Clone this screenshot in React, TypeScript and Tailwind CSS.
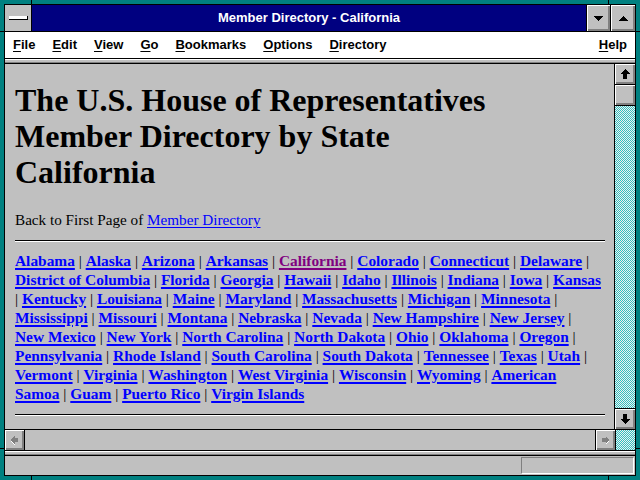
import React from 'react';

const rows: string[][] = [
  ['Alabama', '|', 'Alaska', '|', 'Arizona', '|', 'Arkansas', '|', 'California', '|', 'Colorado', '|', 'Connecticut', '|', 'Delaware', '|'],
  ['District of Columbia', '|', 'Florida', '|', 'Georgia', '|', 'Hawaii', '|', 'Idaho', '|', 'Illinois', '|', 'Indiana', '|', 'Iowa', '|', 'Kansas'],
  ['|', 'Kentucky', '|', 'Louisiana', '|', 'Maine', '|', 'Maryland', '|', 'Massachusetts', '|', 'Michigan', '|', 'Minnesota', '|'],
  ['Mississippi', '|', 'Missouri', '|', 'Montana', '|', 'Nebraska', '|', 'Nevada', '|', 'New Hampshire', '|', 'New Jersey', '|'],
  ['New Mexico', '|', 'New York', '|', 'North Carolina', '|', 'North Dakota', '|', 'Ohio', '|', 'Oklahoma', '|', 'Oregon', '|'],
  ['Pennsylvania', '|', 'Rhode Island', '|', 'South Carolina', '|', 'South Dakota', '|', 'Tennessee', '|', 'Texas', '|', 'Utah', '|'],
  ['Vermont', '|', 'Virginia', '|', 'Washington', '|', 'West Virginia', '|', 'Wisconsin', '|', 'Wyoming', '|', 'American'],
  ['Samoa', '|', 'Guam', '|', 'Puerto Rico', '|', 'Virgin Islands']
];

const menus = [
  ['F', 'ile'],
  ['E', 'dit'],
  ['V', 'iew'],
  ['G', 'o'],
  ['B', 'ookmarks'],
  ['O', 'ptions'],
  ['D', 'irectory']
];

const bevel = 'bg-[#c0c0c0] shadow-[inset_1px_1px_0_#ffffff,inset_-1px_-1px_0_#808080,inset_-2px_-2px_0_#808080]';
const dither = 'bg-[repeating-conic-gradient(#30c0c0_0_25%,#f0f0f0_0_50%)] bg-[length:2px_2px]';

function ArrowV({ down }: { down?: boolean }) {
  return (
    <svg width="20" height="20" viewBox="0 0 20 20" shapeRendering="crispEdges" className={down ? 'rotate-180' : ''}>
      <polygon points="10,5 5,10 8,10 8,15 12,15 12,10 15,10" fill="#000" />
    </svg>
  );
}

function ArrowH({ left }: { left?: boolean }) {
  return (
    <svg width="20" height="20" viewBox="0 0 20 20" shapeRendering="crispEdges" className={left ? '-scale-x-100' : ''}>
      <polygon points="10,7 14,11 10,15 10,13 11,12" fill="#ffffff" />
      <polygon points="10,6 14,10 10,14 10,12 6,12 6,8 10,8" fill="#808080" />
    </svg>
  );
}

function Tri({ up }: { up?: boolean }) {
  return (
    <svg width="9" height="5" viewBox="0 0 9 5" shapeRendering="crispEdges">
      <polygon points={up ? '4.5,0 9,5 0,5' : '0,0 9,0 4.5,5'} fill="#000" />
    </svg>
  );
}

export default function App() {
  return (
    <div className="relative h-[480px] w-[640px] overflow-hidden bg-[#008080] p-[4px] font-['Liberation_Sans',Arial,sans-serif]">
      {/* frame ticks */}
      <div className="absolute left-[31px] top-0 h-[4px] w-px bg-black" />
      <div className="absolute left-[608px] top-0 h-[4px] w-px bg-black" />
      <div className="absolute bottom-0 left-[31px] h-[4px] w-px bg-black" />
      <div className="absolute bottom-0 left-[608px] h-[4px] w-px bg-black" />
      <div className="absolute left-0 top-[31px] h-px w-[4px] bg-black" />
      <div className="absolute right-0 top-[31px] h-px w-[4px] bg-black" />
      <div className="absolute left-0 top-[448px] h-px w-[4px] bg-black" />
      <div className="absolute right-0 top-[448px] h-px w-[4px] bg-black" />

      <div className="flex h-full flex-col border border-black bg-[#c0c0c0]">
        {/* title bar */}
        <div className="flex h-[27px] shrink-0 border-b border-black">
          <div className="flex w-[27px] items-center justify-center border-r border-black bg-[#c0c0c0]">
            <div className="h-[4px] w-[19px] border-b border-r border-black bg-white" />
          </div>
          <div className="flex flex-1 items-center justify-center bg-[#000080] pb-px text-[13px] font-bold text-white">
            Member Directory - California
          </div>
          <div className={`flex w-[24px] items-center justify-center border-l border-black ${bevel}`}>
            <Tri />
          </div>
          <div className={`flex w-[25px] items-center justify-center border-l border-black ${bevel}`}>
            <Tri up />
          </div>
        </div>

        {/* menu bar */}
        <div className="flex h-[27px] shrink-0 items-center border-b border-black bg-white px-[8px] text-[13px] font-bold text-black">
          <div className="flex gap-[17px]">
            {menus.map(([k, rest]) => (
              <span key={k}>
                <span className="underline decoration-1 underline-offset-2">{k}</span>
                {rest}
              </span>
            ))}
          </div>
          <span className="ml-auto">
            <span className="underline decoration-1 underline-offset-2">H</span>elp
          </span>
        </div>

        {/* separator band */}
        <div className="h-[4px] shrink-0 border-t border-white border-b border-b-[#808080] bg-[#c0c0c0]" />
        <div className="h-px shrink-0 bg-black" />

        {/* main area */}
        <div className="flex min-h-0 flex-1">
          <div className="min-w-0 flex-1 overflow-hidden pl-[10px] font-['Liberation_Serif','Times_New_Roman',serif] text-black">
            <h1 className="mt-[18px] text-[32px] font-bold leading-[36px]">
              The U.S. House of Representatives
              <br />
              Member Directory by State
              <br />
              California
            </h1>
            <p className="mt-[20px] text-[15.2px] leading-[19px]">
              Back to First Page of{' '}
              <a className="text-[#0000ff] underline decoration-1 underline-offset-2">Member Directory</a>
            </p>
            <div className="mt-[11px] h-0 w-[590px] border-t border-b border-t-black border-b-white" />
            <div className="mt-[9px] text-[15.4px] leading-[19px]">
              {rows.map((row, i) => (
                <div key={i} className="whitespace-nowrap">
                  {row.map((t, j) => (
                    <React.Fragment key={j}>
                      {j > 0 && ' '}
                      {t === '|' ? (
                        <span>|</span>
                      ) : (
                        <a
                          className={`font-bold underline decoration-2 underline-offset-[2px] ${
                            t === 'California' ? 'text-[#800080]' : 'text-[#0000ff]'
                          }`}
                        >
                          {t}
                        </a>
                      )}
                    </React.Fragment>
                  ))}
                </div>
              ))}
            </div>
            <div className="mt-[11px] h-0 w-[590px] border-t border-b border-t-black border-b-white" />
          </div>

          {/* vertical scrollbar */}
          <div className="flex w-[21px] shrink-0 flex-col border-l border-black">
            <div className={`flex h-[21px] items-center justify-center border-b border-black ${bevel}`}>
              <ArrowV />
            </div>
            <div className={`h-[21px] border-b border-black ${bevel}`} />
            <div className={`flex-1 ${dither}`} />
            <div className={`flex h-[21px] items-center justify-center border-t border-black ${bevel}`}>
              <ArrowV down />
            </div>
          </div>
        </div>

        {/* horizontal scrollbar */}
        <div className="flex h-[22px] shrink-0 border-y border-black">
          <div className={`flex w-[20px] items-center justify-center border-r border-black ${bevel}`}>
            <ArrowH left />
          </div>
          <div className="flex-1 bg-[#c0c0c0]" />
          <div className={`flex w-[20px] items-center justify-center border-l border-black ${bevel}`}>
            <ArrowH />
          </div>
          <div className={`w-[20px] border-l border-black ${dither}`} />
        </div>

        <div className="h-[4px] shrink-0 border-t border-white border-b border-b-[#808080] bg-[#c0c0c0]" />
        <div className="h-px shrink-0 bg-black" />

        {/* status bar */}
        <div className="flex h-[19px] shrink-0 items-center justify-end bg-[#c0c0c0] pr-px">
          <div className="h-[17px] w-[113px] border-l border-t border-b border-r border-l-[#808080] border-t-[#808080] border-b-white border-r-white" />
        </div>
      </div>
    </div>
  );
}
